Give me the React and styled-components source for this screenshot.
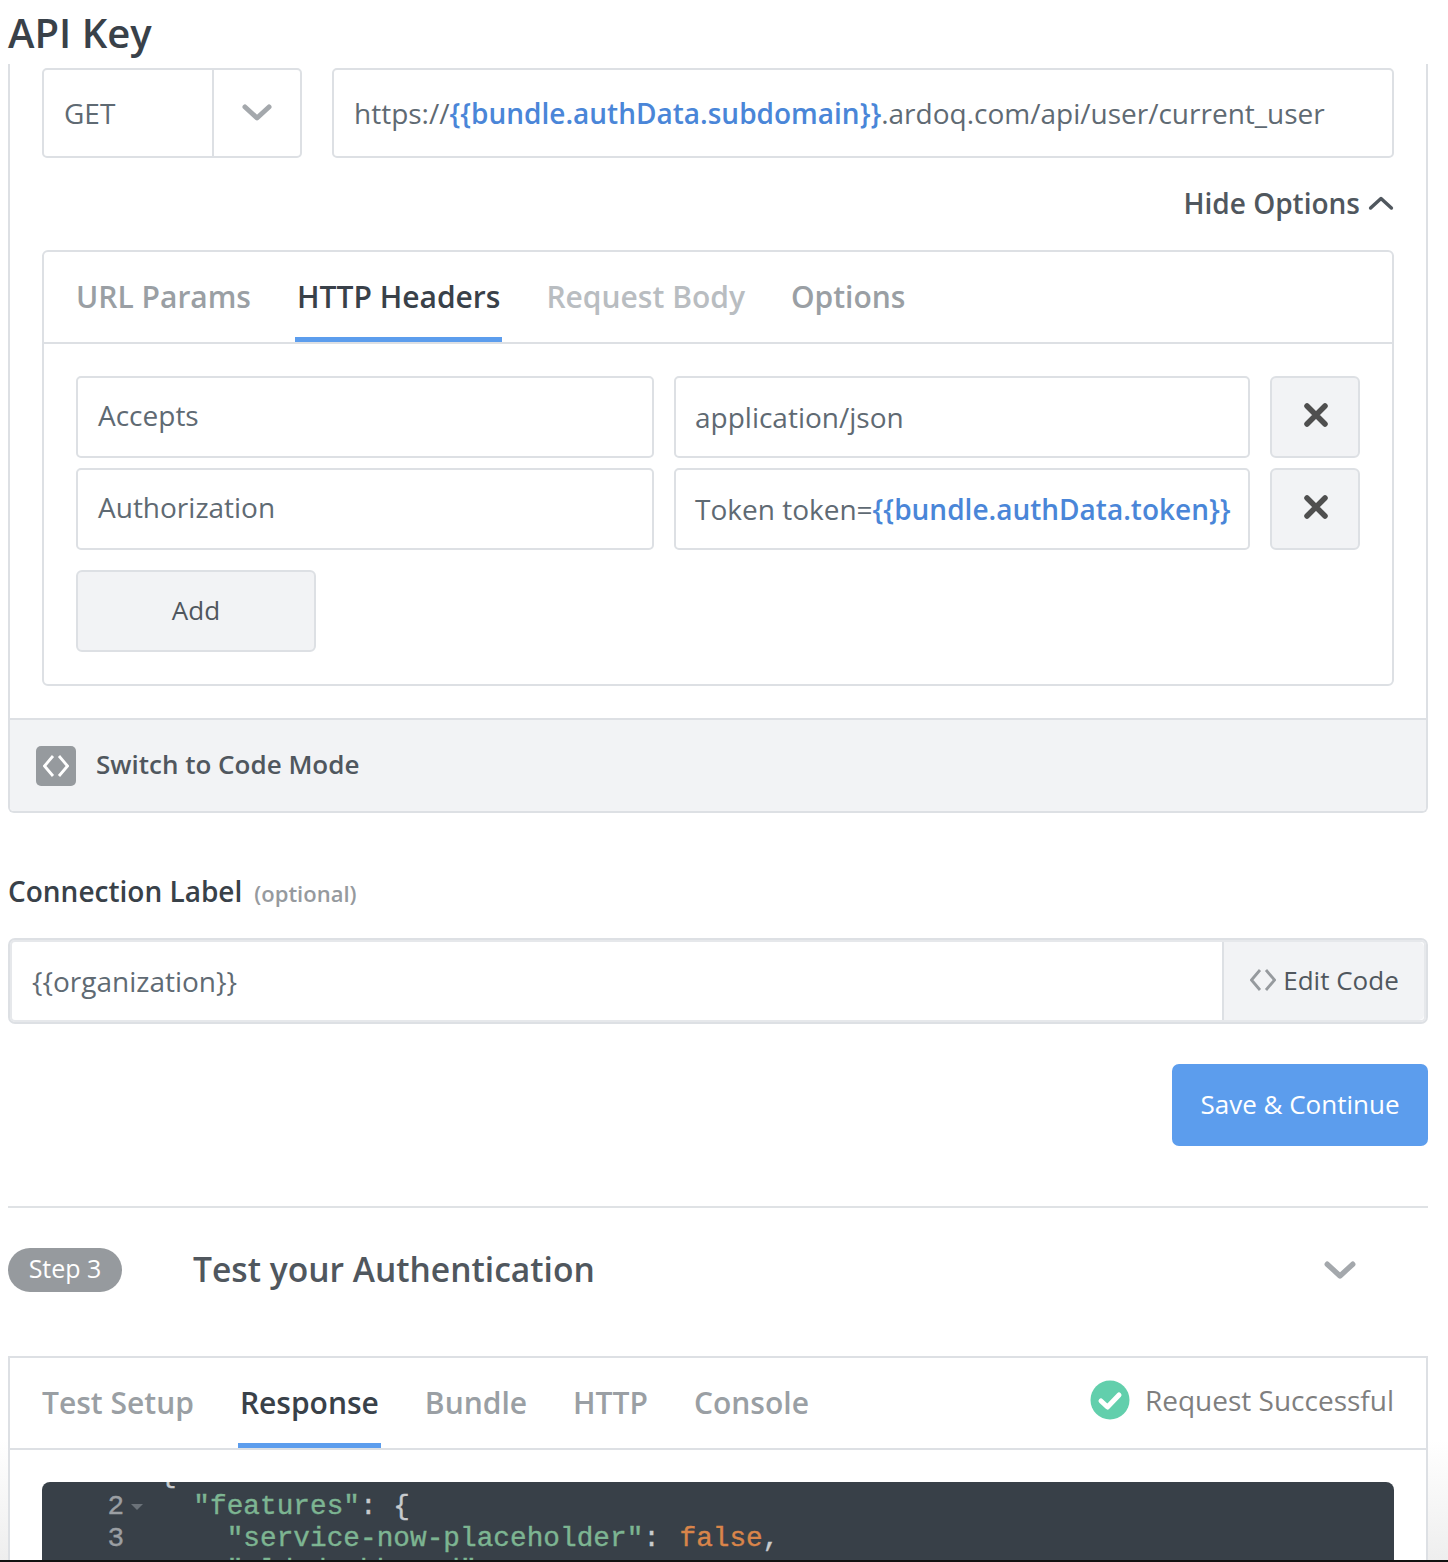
import React from 'react'
import styled, { createGlobalStyle } from 'styled-components'

const GlobalStyle = createGlobalStyle`
  html, body {
    margin: 0;
    padding: 0;
    background: #fff;
  }

  * {
    box-sizing: border-box;
  }
`

const Page = styled.div`
  width: 1448px;
  height: 1562px;
  overflow: hidden;
  background: linear-gradient(to bottom, #fff 1440px, #eeeeee 1560px);
  font-family: "Open Sans", "Noto Sans", sans-serif;
  color: #5f6a73;
`

const Content = styled.div`
  height: 1560px;
  padding: 0 20px 0 8px;
  overflow: hidden;
`

const BlackEdge = styled.div`
  height: 2px;
  background: #111;
`

const Title = styled.h1`
  height: 64px;
  margin: 0;
  font-size: 40px;
  line-height: 66px;
  font-weight: 600;
  color: #394149;
`

const Panel = styled.div`
  border: 2px solid #dde0e4;
  border-top: 0;
  border-radius: 0 0 6px 6px;
`

const PanelBody = styled.div`
  padding: 4px 32px 32px;
`

const RequestRow = styled.div`
  display: flex;
  gap: 30px;
  height: 90px;
`

const Field = styled.div`
  display: flex;
  align-items: center;
  flex: 1;
  min-width: 0;
  height: ${p => p.$height || 82}px;
  padding: 0 20px ${p => p.$lift ?? 4}px ${p => p.$inset || 20}px;
  border: 2px solid #dde0e4;
  border-radius: 5px;
  background: #fff;
  font-size: 28px;
  white-space: nowrap;
  color: #5f6a73;
`

const Select = styled.div`
  display: flex;
  flex: 0 0 260px;
  border: 2px solid #dde0e4;
  border-radius: 5px;
`

const SelectValue = styled.div`
  display: flex;
  align-items: center;
  width: 170px;
  padding-left: 20px;
  border-right: 2px solid #dde0e4;
  font-size: 28px;
`

const SelectArrow = styled.div`
  display: flex;
  flex: 1;
  align-items: center;
  justify-content: center;
`

const Var = styled.span`
  font-weight: 600;
  color: #4a86d8;
`

const HideRow = styled.div`
  display: flex;
  align-items: center;
  justify-content: flex-end;
  gap: 8px;
  height: 92px;
  padding-bottom: 2px;
  font-size: 28px;
  font-weight: 600;
  color: #50575e;
`

const Card = styled.div`
  border: 2px solid #dde0e4;
  border-radius: 6px;
`

const Tabs = styled.div`
  display: flex;
  align-items: stretch;
  gap: 42px;
  height: 92px;
  padding: 0 32px 0 30px;
  border-bottom: 2px solid #dde0e4;
`

const Tab = styled.div`
  display: flex;
  align-items: center;
  height: 100%;
  padding: 4px 2px 0;
  border-bottom: 5px solid ${p => p.$active ? '#5c9ded' : 'transparent'};
  font-size: 30px;
  font-weight: 600;
  color: ${p => p.$active ? '#394149' : p.$muted ? '#b9bdc1' : '#9a9fa4'};
`

const HeaderRows = styled.div`
  display: flex;
  flex-direction: column;
  gap: 10px;
  padding: 32px;
`

const HeaderRow = styled.div`
  display: grid;
  grid-template-columns: 578px 576px 90px;
  gap: 20px;
`

const IconButton = styled.div`
  display: flex;
  align-items: center;
  justify-content: center;
  height: 82px;
  padding: 0 0 4px 2px;
  border: 2px solid #dde0e4;
  border-radius: 6px;
  background: #f2f3f5;
`

const AddButton = styled.div`
  display: flex;
  align-items: center;
  justify-content: center;
  width: 240px;
  height: 82px;
  margin-top: 10px;
  padding-bottom: 2px;
  border: 2px solid #dde0e4;
  border-radius: 6px;
  background: #f2f3f5;
  font-size: 26px;
  color: #50575e;
`

const CodeMode = styled.div`
  display: flex;
  align-items: center;
  gap: 20px;
  height: 93px;
  padding-left: 26px;
  border-top: 2px solid #dde0e4;
  border-radius: 0 0 4px 4px;
  background: #f2f3f5;
  font-size: 26px;
  font-weight: 600;
  color: #50575e;
`

const CodeLabel = styled.span`
  margin-top: -4px;
`

const CodeBadge = styled.div`
  display: flex;
  align-items: center;
  justify-content: center;
  width: 40px;
  height: 40px;
  border-radius: 5px;
  background: #969a9e;
`

const LabelRow = styled.div`
  display: flex;
  align-items: baseline;
  gap: 12px;
  height: 40px;
  margin-top: 59px;
  line-height: 38px;
  font-size: 28px;
  font-weight: 600;
  color: #394149;
`

const Optional = styled.span`
  font-size: 22px;
  color: #969a9e;
`

const LabelInput = styled.div`
  display: flex;
  height: 86px;
  margin-top: 26px;
  padding: 2px;
  overflow: hidden;
  border: 2px solid #dde0e4;
  border-radius: 7px;
  background: #fff;
  box-shadow: inset 0 0 0 2px #e6e8eb;
`

const LabelValue = styled.div`
  display: flex;
  flex: 1;
  align-items: center;
  padding-left: 20px;
  font-size: 28px;
`

const EditCode = styled.div`
  display: flex;
  align-items: center;
  justify-content: center;
  gap: 7px;
  width: 202px;
  padding: 0 0 2px 1px;
  border-left: 2px solid #dde0e4;
  border-radius: 0 5px 5px 0;
  background: #f2f3f5;
  font-size: 26px;
  color: #50575e;
`

const SaveRow = styled.div`
  display: flex;
  justify-content: flex-end;
  margin-top: 40px;
`

const SaveButton = styled.div`
  display: flex;
  align-items: center;
  justify-content: center;
  width: 256px;
  height: 82px;
  padding-bottom: 3px;
  border-radius: 7px;
  background: #5c9ded;
  font-size: 26px;
  color: #fff;
`

const Rule = styled.hr`
  height: 2px;
  margin: 60px 0 0;
  border: 0;
  background: #dfe2e5;
`

const StepRow = styled.div`
  display: flex;
  align-items: center;
  height: 148px;
  padding: 40px 0 64px;
`

const StepPill = styled.div`
  display: flex;
  align-items: center;
  justify-content: center;
  width: 114px;
  height: 44px;
  margin-right: 71px;
  padding-bottom: 4px;
  border-radius: 22px;
  background: #969a9e;
  font-size: 25px;
  color: #fff;
`

const StepTitle = styled.h2`
  flex: 1;
  margin: -2px 0 0;
  font-size: 33.600px;
  font-weight: 600;
  color: #50575e;
`

const StepArrow = styled.div`
  display: flex;
  justify-content: center;
  width: 176px;
  margin-top: 2px;
`

const ResultPanel = styled.div`
  border: 2px solid #dde0e4;
  border-bottom: 0;
  background: #fff;
`

const Status = styled.div`
  display: flex;
  align-items: center;
  gap: 15px;
  margin-left: auto;
  padding-bottom: 6px;
  font-size: 28px;
  color: #7f7f7f;
`

const CodeWrap = styled.div`
  padding: 32px 32px 0;
`

const CodeBlock = styled.div`
  height: 78px;
  overflow: hidden;
  border-radius: 8px 8px 0 0;
  background: #384048;
  font-family: "Liberation Mono", monospace;
  font-size: 27.700px;
  line-height: 32px;
  -webkit-text-stroke: 0.4px currentColor;
`

const CodeLines = styled.div`
  margin-top: -23px;
`

const CodeLine = styled.div`
  display: flex;
  height: 32px;
  white-space: pre;
`

const Gutter = styled.span`
  width: 82px;
  text-align: right;
  color: #9b9fa3;
`

const Fold = styled.span`
  display: flex;
  align-items: center;
  width: 36px;
  padding-left: 7px;
`

const Key = styled.span`
  letter-spacing: 0.05px;
  color: #7db592;
`

const Punct = styled.span`
  color: #c8cbce;
`

const Bool = styled.span`
  padding-left: 3px;
  color: #d9854a;
`

const Chevron = ({ size = 30, up, color = '#a4a8ac', width = 5 }) => (
  <svg width={size} height={size * 0.6} viewBox="0 0 30 18" fill="none">
    <path
      d={up ? 'M3 15 15 4l12 11' : 'M3 3l12 11L27 3'}
      stroke={color}
      strokeWidth={width}
      strokeLinecap="round"
      strokeLinejoin="round"
    />
  </svg>
)

const CloseIcon = () => (
  <svg width="24" height="24" viewBox="0 0 24 24" fill="none">
    <path d="M3 3l18 18M21 3 3 21" stroke="#4f4f4f" strokeWidth="5.5" strokeLinecap="round" />
  </svg>
)

const CodeIcon = ({ color, size = 26 }) => (
  <svg width={size} height={size} viewBox="0 0 26 26" fill="none">
    <path d="M10 3 1.500 13 10 23M16 3l8.500 10L16 23" stroke={color} strokeWidth="2.8" />
  </svg>
)

const CheckIcon = () => (
  <svg width="40" height="40" viewBox="0 0 40 40">
    <circle cx="20" cy="20" r="19.500" fill="#62cfac" />
    <path d="M11 21l6.500 6L29 15" fill="none" stroke="#fff" strokeWidth="5" strokeLinecap="round" strokeLinejoin="round" />
  </svg>
)

const FoldMark = () => (
  <svg width="12" height="6" viewBox="0 0 12 6">
    <path d="M0 0h12L6 6z" fill="#6b7279" />
  </svg>
)

const App = () => {
  return (
    <Page>
      <GlobalStyle />
      <Content>
        <Title>API Key</Title>
        <Panel>
          <PanelBody>
            <RequestRow>
              <Select>
                <SelectValue>GET</SelectValue>
                <SelectArrow><Chevron /></SelectArrow>
              </Select>
              <Field $height={90} $lift={0}>
                https://<Var>{'{{bundle.authData.subdomain}}'}</Var>.ardoq.com/api/user/current_user
              </Field>
            </RequestRow>
            <HideRow>
              Hide Options <Chevron size={26} up color="#50575e" width={4} />
            </HideRow>
            <Card>
              <Tabs>
                <Tab>URL Params</Tab>
                <Tab $active>HTTP Headers</Tab>
                <Tab $muted>Request Body</Tab>
                <Tab>Options</Tab>
              </Tabs>
              <HeaderRows>
                <HeaderRow>
                  <Field>Accepts</Field>
                  <Field $lift={0} $inset={19}>application/json</Field>
                  <IconButton><CloseIcon /></IconButton>
                </HeaderRow>
                <HeaderRow>
                  <Field>Authorization</Field>
                  <Field $lift={0} $inset={19}>Token token=<Var>{'{{bundle.authData.token}}'}</Var></Field>
                  <IconButton><CloseIcon /></IconButton>
                </HeaderRow>
                <AddButton>Add</AddButton>
              </HeaderRows>
            </Card>
          </PanelBody>
          <CodeMode>
            <CodeBadge><CodeIcon color="#fff" /></CodeBadge>
            <CodeLabel>Switch to Code Mode</CodeLabel>
          </CodeMode>
        </Panel>

        <LabelRow>Connection Label <Optional>(optional)</Optional></LabelRow>
        <LabelInput>
          <LabelValue>{'{{organization}}'}</LabelValue>
          <EditCode><CodeIcon color="#969a9e" />Edit Code</EditCode>
        </LabelInput>

        <SaveRow><SaveButton>Save &amp; Continue</SaveButton></SaveRow>
        <Rule />

        <StepRow>
          <StepPill>Step 3</StepPill>
          <StepTitle>Test your Authentication</StepTitle>
          <StepArrow><Chevron size={32} /></StepArrow>
        </StepRow>

        <ResultPanel>
          <Tabs>
            <Tab>Test Setup</Tab>
            <Tab $active>Response</Tab>
            <Tab>Bundle</Tab>
            <Tab>HTTP</Tab>
            <Tab>Console</Tab>
            <Status><CheckIcon />Request Successful</Status>
          </Tabs>
          <CodeWrap>
            <CodeBlock>
              <CodeLines>
                <CodeLine><Gutter /><Fold /><Punct>{'{'}</Punct></CodeLine>
                <CodeLine><Gutter>2</Gutter><Fold><FoldMark /></Fold><Key>{'  "features"'}</Key><Punct>{': {'}</Punct></CodeLine>
                <CodeLine><Gutter>3</Gutter><Fold /><Key>{'    "service-now-placeholder"'}</Key><Punct>: </Punct><Bool>false</Bool><Punct>,</Punct></CodeLine>
                <CodeLine><Gutter /><Fold /><Key>{'    "old-dashboard"'}</Key></CodeLine>
              </CodeLines>
            </CodeBlock>
          </CodeWrap>
        </ResultPanel>
      </Content>
      <BlackEdge />
    </Page>
  )
}

export default App
